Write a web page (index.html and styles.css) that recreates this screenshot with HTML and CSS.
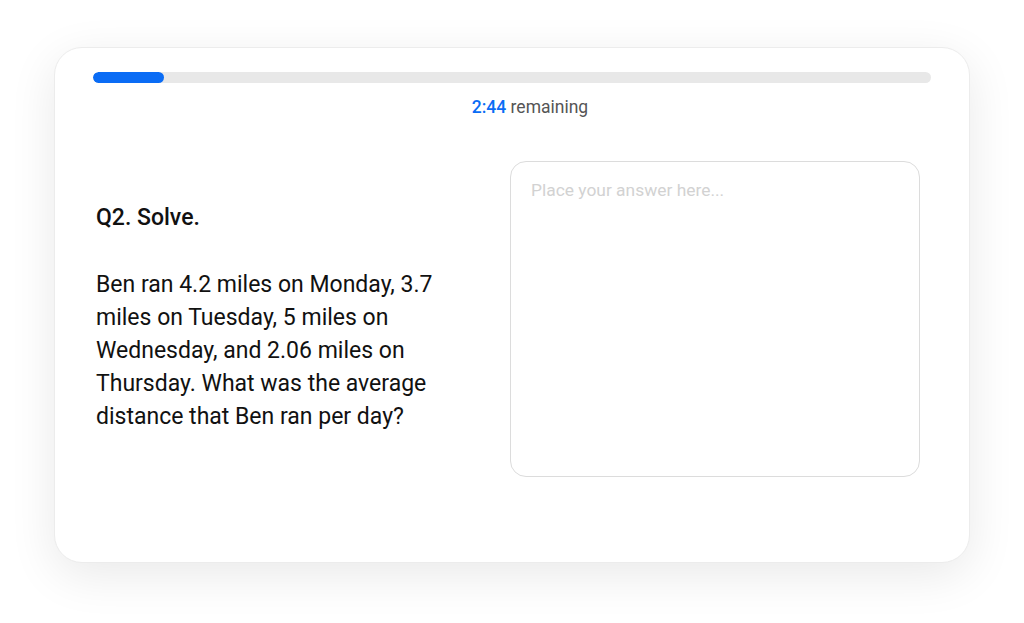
FILE: index.html
```html
<!DOCTYPE html>
<html lang="en">
<head>
    <meta charset="UTF-8">
    <meta name="viewport" content="width=device-width, initial-scale=1.0">
    <title>Quiz - Q2</title>
    <link rel="stylesheet" href="styles.css">
</head>
<body>
    <div class="card">
        <div class="progress">
            <div class="progress-fill" style="width: 8.5%;"></div>
        </div>
        <div class="timer"><span class="time">2:44</span> remaining</div>

        <div class="content">
            <div class="question">
                <h2 class="q-title">Q2. Solve.</h2>
                <p class="q-text">Ben ran 4.2 miles on Monday, 3.7 miles on Tuesday, 5 miles on Wednesday, and 2.06 miles on Thursday. What was the average distance that Ben ran per day?</p>
            </div>
            <textarea class="answer" placeholder="Place your answer here..."></textarea>
        </div>
    </div>
</body>
</html>
```

FILE: styles.css
```css
html, body {
    margin: 0;
    background: #ffffff;
}

body {
    min-height: 623px;
    padding-top: 47px;
    box-sizing: border-box;
    font-family: Roboto, "Liberation Sans", Arial, sans-serif;
    color: #111;
}

.card {
    box-sizing: border-box;
    width: 916px;
    height: 516px;
    margin-left: 54px;
    padding: 24px 38px 0;
    background: #fff;
    border: 1px solid #ececec;
    border-radius: 28px;
    box-shadow: 0 12px 48px rgba(0, 0, 0, 0.09);
}

.progress {
    height: 11px;
    background: #e8e8e8;
    border-radius: 6px;
    overflow: hidden;
}

.progress-fill {
    height: 100%;
    background: #0a6cf5;
    border-radius: 6px;
}

.timer {
    margin-top: 14px;
    padding-left: 36px;
    text-align: center;
    font-size: 17.5px;
    line-height: 20px;
    color: #555;
}

.time {
    color: #0a6cf5;
    font-weight: 500;
}

.content {
    display: flex;
    justify-content: space-between;
    margin-top: 44px;
    padding: 0 11px 0 3px;
}

.question {
    width: 360px;
    padding-top: 40px;
}

.q-title {
    margin: 0;
    font-size: 23px;
    font-weight: 500;
    line-height: 33px;
}

.q-text {
    margin: 34px 0 0;
    font-size: 23px;
    line-height: 33px;
}

.answer {
    box-sizing: border-box;
    width: 410px;
    height: 316px;
    padding: 17px 20px;
    border: 1px solid #dcdcdc;
    border-radius: 16px;
    font-family: inherit;
    font-size: 17.4px;
    line-height: 22px;
    resize: none;
    outline: none;
}

.answer::placeholder {
    color: #d2d2d2;
}
```
